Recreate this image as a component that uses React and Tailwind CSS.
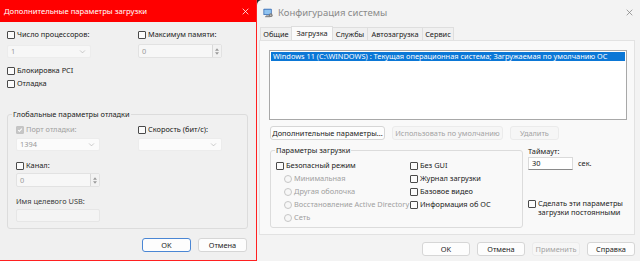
import React from 'react';

const font = { fontFamily: '"Noto Sans", "Open Sans", sans-serif' };

function Check({ label, checked, disabled, className = '' }) {
  return (
    <div className={`flex items-center gap-[2px] h-[13px] whitespace-nowrap ${className}`}>
      <span
        className={`w-[8px] h-[8px] rounded-[1px] border flex items-center justify-center flex-shrink-0 ${
          disabled ? 'border-[#c4c4c4] bg-[#c6c6c6]' : 'border-[#4a4a4a] bg-[#fbfbfb]'
        }`}
      >
        {checked && (
          <svg className="w-[6px] h-[6px]" viewBox="0 0 10 10" fill="none" stroke="#fff" strokeWidth="1.8">
            <path d="M2 5.2l2 2 4-4.4" />
          </svg>
        )}
      </span>
      <span className={disabled ? 'text-[#a0a0a0]' : 'text-[#1b1b1b]'}>{label}</span>
    </div>
  );
}

function Radio({ label }) {
  return (
    <div className="flex items-center gap-[2px] h-[13px] whitespace-nowrap">
      <span className="w-[8px] h-[8px] rounded-full border border-[#c6c6c6] bg-[#f7f7f7] flex-shrink-0" />
      <span className="text-[#a0a0a0]">{label}</span>
    </div>
  );
}

function Chevron() {
  return (
    <svg className="w-[7px] h-[7px]" viewBox="0 0 10 10" fill="none" stroke="#b5b5b5" strokeWidth="1">
      <path d="M1.5 3.5L5 7l3.5-3.5" />
    </svg>
  );
}

function Select({ value, className = '' }) {
  return (
    <div className={`h-[13px] bg-[#f7f7f7] border border-[#ececec] rounded-[2px] flex items-center justify-between pl-[3px] pr-[4px] text-[#9a9a9a] ${className}`}>
      <span>{value}</span>
      <Chevron />
    </div>
  );
}

function Spin({ value, className = '' }) {
  return (
    <div className={`h-[14px] bg-[#f7f7f7] border border-[#e2e2e2] rounded-[2px] flex items-stretch ${className}`}>
      <span className="flex-1 pl-[3px] text-[#9a9a9a] flex items-center">{value}</span>
      <div className="w-[9px] border-l border-[#d8d8d8] flex flex-col items-center justify-center gap-[1px] bg-[#f2f2f2]">
        <svg className="w-[4px] h-[3px]" viewBox="0 0 6 4" fill="#9a9a9a"><path d="M3 0l3 4H0z" /></svg>
        <svg className="w-[4px] h-[3px]" viewBox="0 0 6 4" fill="#9a9a9a"><path d="M0 0h6L3 4z" /></svg>
      </div>
    </div>
  );
}

function Btn({ children, primary, disabled, className = '' }) {
  return (
    <div
      className={`h-[14px] rounded-[3px] flex items-center justify-center whitespace-nowrap border ${
        primary
          ? 'border-[#4a86d4] bg-[#fdfdfd] text-[#1b1b1b]'
          : disabled
          ? 'border-[#ebebeb] bg-[#f6f6f6] text-[#a3a3a3]'
          : 'border-[#d6d6d6] bg-[#fdfdfd] text-[#1b1b1b]'
      } ${className}`}
    >
      {children}
    </div>
  );
}

function Group({ title, className = '', children }) {
  return (
    <div className={`relative border border-[#dcdcdc] rounded-[3px] ${className}`}>
      <span className="absolute -top-[7px] left-[4px] px-[1px] bg-inherit leading-[12px] text-[#1b1b1b] whitespace-nowrap">
        {title}
      </span>
      {children}
    </div>
  );
}

function AdvancedDialog() {
  return (
    <div className="w-[257px] h-[261px] flex flex-col bg-[#f0f0f0] border-r border-b border-[#ff2020] flex-shrink-0">
      <div className="h-[22px] bg-[#ff0000] flex items-center justify-between pl-[4px] pr-[7px] text-white text-[7.7px]">
        <span>Дополнительные параметры загрузки</span>
        <svg className="w-[7px] h-[7px]" viewBox="0 0 10 10" stroke="#fff" strokeWidth="1.1">
          <path d="M1 1l8 8M9 1l-8 8" />
        </svg>
      </div>
      <div className="flex-1 flex flex-col pl-[7px] pt-[6px]">
        <div className="flex">
          <div className="w-[131px] flex flex-col gap-[4px]">
            <Check label="Число процессоров:" />
            <Select value="1" className="w-[84px]" />
          </div>
          <div className="w-[100px] flex flex-col gap-[3px]">
            <Check label="Максимум памяти:" />
            <Spin value="0" className="w-[84px]" />
          </div>
        </div>
        <Check label="Блокировка PCI" className="mt-[6px]" />
        <Check label="Отладка" />
        <Group title="Глобальные параметры отладки" className="mt-[24px] w-[241px] h-[115px] bg-[#f0f0f0]">
          <div className="flex pl-[8px] pt-[8px]">
            <div className="w-[122px] flex flex-col gap-[2px]">
              <Check label="Порт отладки:" checked disabled />
              <Select value="1394" className="w-[84px] bg-[#fbfbfb] text-[#4a4a4a]" />
            </div>
            <div className="flex flex-col gap-[2px]">
              <Check label="Скорость (бит/с):" />
              <Select value="" className="w-[84px] bg-[#fbfbfb]" />
            </div>
          </div>
          <div className="flex flex-col gap-[1px] pl-[8px] mt-[8px]">
            <Check label="Канал:" />
            <Spin value="0" className="w-[84px]" />
          </div>
          <div className="pl-[8px] mt-[8px] text-[#3a3a3a] leading-[13px]">Имя целевого USB:</div>
          <div className="ml-[8px] mt-[1px] w-[84px] h-[13px] bg-[#f4f4f4] border border-[#e6e6e6] rounded-[2px]" />
        </Group>
        <div className="flex justify-end gap-[7px] mt-[9px] pr-[9px]">
          <Btn primary className="w-[49px]">OK</Btn>
          <Btn className="w-[49px]">Отмена</Btn>
        </div>
      </div>
    </div>
  );
}

function MsconfigIcon() {
  return (
    <svg className="w-[10px] h-[10px]" viewBox="0 0 12 12">
      <rect x="0.5" y="1" width="10" height="7.5" rx="0.8" fill="#3b6fb6" />
      <rect x="1.5" y="2" width="8" height="5.5" fill="#8fc3f0" />
      <rect x="3.5" y="9" width="4" height="1" fill="#6a6a6a" />
      <rect x="2.5" y="10" width="6" height="1" fill="#6a6a6a" />
      <circle cx="9.3" cy="8.6" r="2.2" fill="#7a7a7a" />
      <circle cx="9.3" cy="8.6" r="0.8" fill="#e0e0e0" />
    </svg>
  );
}

function SystemConfig() {
  const tabs = [
    ['Общие', 'w-[32px]'],
    ['Загрузка', 'w-[42px]'],
    ['Службы', 'w-[36px]'],
    ['Автозагрузка', 'w-[56px]'],
    ['Сервис', 'w-[32px]'],
  ];
  return (
    <div className="flex-1 h-[261px] bg-[#f3f3f3] rounded-tl-[5px] flex flex-col">
      <div className="h-[25px] flex items-center justify-between pl-[6px] pr-[7px]">
        <div className="flex items-center gap-[5px] text-[#8a8a8a] text-[9.5px]">
          <MsconfigIcon />
          <span>Конфигурация системы</span>
        </div>
        <svg className="w-[7px] h-[7px]" viewBox="0 0 10 10" stroke="#7a7a7a" strokeWidth="1">
          <path d="M1 1l8 8M9 1l-8 8" />
        </svg>
      </div>
      <div className="flex pl-[3px] mt-[2px] h-[13px] items-end">
        {tabs.map(([t, w], i) => (
          <div
            key={t}
            className={`${w} -mr-[1px] border border-b-0 border-[#dedede] flex items-center justify-center whitespace-nowrap text-[#1b1b1b] ${
              i === 1 ? 'h-[14px] bg-[#fbfbfb] relative z-10' : 'h-[13px] bg-[#f0f0f0]'
            }`}
          >
            {t}
          </div>
        ))}
      </div>
      <div className="ml-[2px] mr-[5px] h-[195px] bg-[#f9f9f9] border border-[#e2e2e2] flex flex-col pl-[9px] pr-[7px] pt-[9px]">
        <div className="h-[70px] bg-white border border-[#a8a8a8] p-[1px]">
          <div className="bg-[#0b77d6] text-white h-[9px] leading-[9px] pl-[2px] whitespace-nowrap overflow-hidden">
            Windows 11 (C:\WINDOWS) : Текущая операционная система; Загружаемая по умолчанию ОС
          </div>
        </div>
        <div className="flex mt-[6px] pl-[1px] gap-[7px]">
          <Btn className="w-[115px]">Дополнительные параметры...</Btn>
          <Btn disabled className="w-[111px]">Использовать по умолчанию</Btn>
          <Btn disabled className="w-[49px]">Удалить</Btn>
        </div>
        <div className="flex pl-[1px] items-start">
          <Group title="Параметры загрузки" className="mt-[10px] w-[253px] h-[78px] bg-[#f9f9f9]">
            <div className="flex pt-[8px] pl-[5px]">
              <div className="w-[134px] flex flex-col">
                <Check label="Безопасный режим" />
                <div className="pl-[8px] flex flex-col">
                  <Radio label="Минимальная" />
                  <Radio label="Другая оболочка" />
                  <Radio label="Восстановление Active Directory" />
                  <Radio label="Сеть" />
                </div>
              </div>
              <div className="flex flex-col">
                <Check label="Без GUI" />
                <Check label="Журнал загрузки" />
                <Check label="Базовое видео" />
                <Check label="Информация  об ОС" />
              </div>
            </div>
          </Group>
          <div className="ml-[5px] mt-[5px] flex flex-col">
            <span className="text-[#1b1b1b] leading-[12px]">Таймаут:</span>
            <div className="flex items-center gap-[5px]">
              <div className="w-[45px] h-[13px] bg-white border border-[#dadada] border-b-[#8a8a8a] pl-[3px] flex items-center text-[#1b1b1b]">
                30
              </div>
              <span className="text-[#1b1b1b]">сек.</span>
            </div>
            <div className="flex gap-[2px] mt-[29px]">
              <span className="w-[8px] h-[8px] mt-[1px] rounded-[1px] border border-[#4a4a4a] bg-[#fbfbfb] flex-shrink-0" />
              <span className="text-[#1b1b1b] leading-[9px] whitespace-nowrap">
                Сделать эти параметры
                <br />
                загрузки постоянными
              </span>
            </div>
          </div>
        </div>
      </div>
      <div className="flex justify-end gap-[7px] mt-[7px] pr-[5px]">
        <Btn className="w-[48px]">OK</Btn>
        <Btn className="w-[48px]">Отмена</Btn>
        <Btn disabled className="w-[48px]">Применить</Btn>
        <Btn className="w-[48px]">Справка</Btn>
      </div>
    </div>
  );
}

export default function App() {
  return (
    <div className="w-[640px] h-[261px] bg-[#2a2a2a] flex overflow-hidden text-[7.4px] leading-[13px]" style={font}>
      <AdvancedDialog />
      <SystemConfig />
    </div>
  );
}
